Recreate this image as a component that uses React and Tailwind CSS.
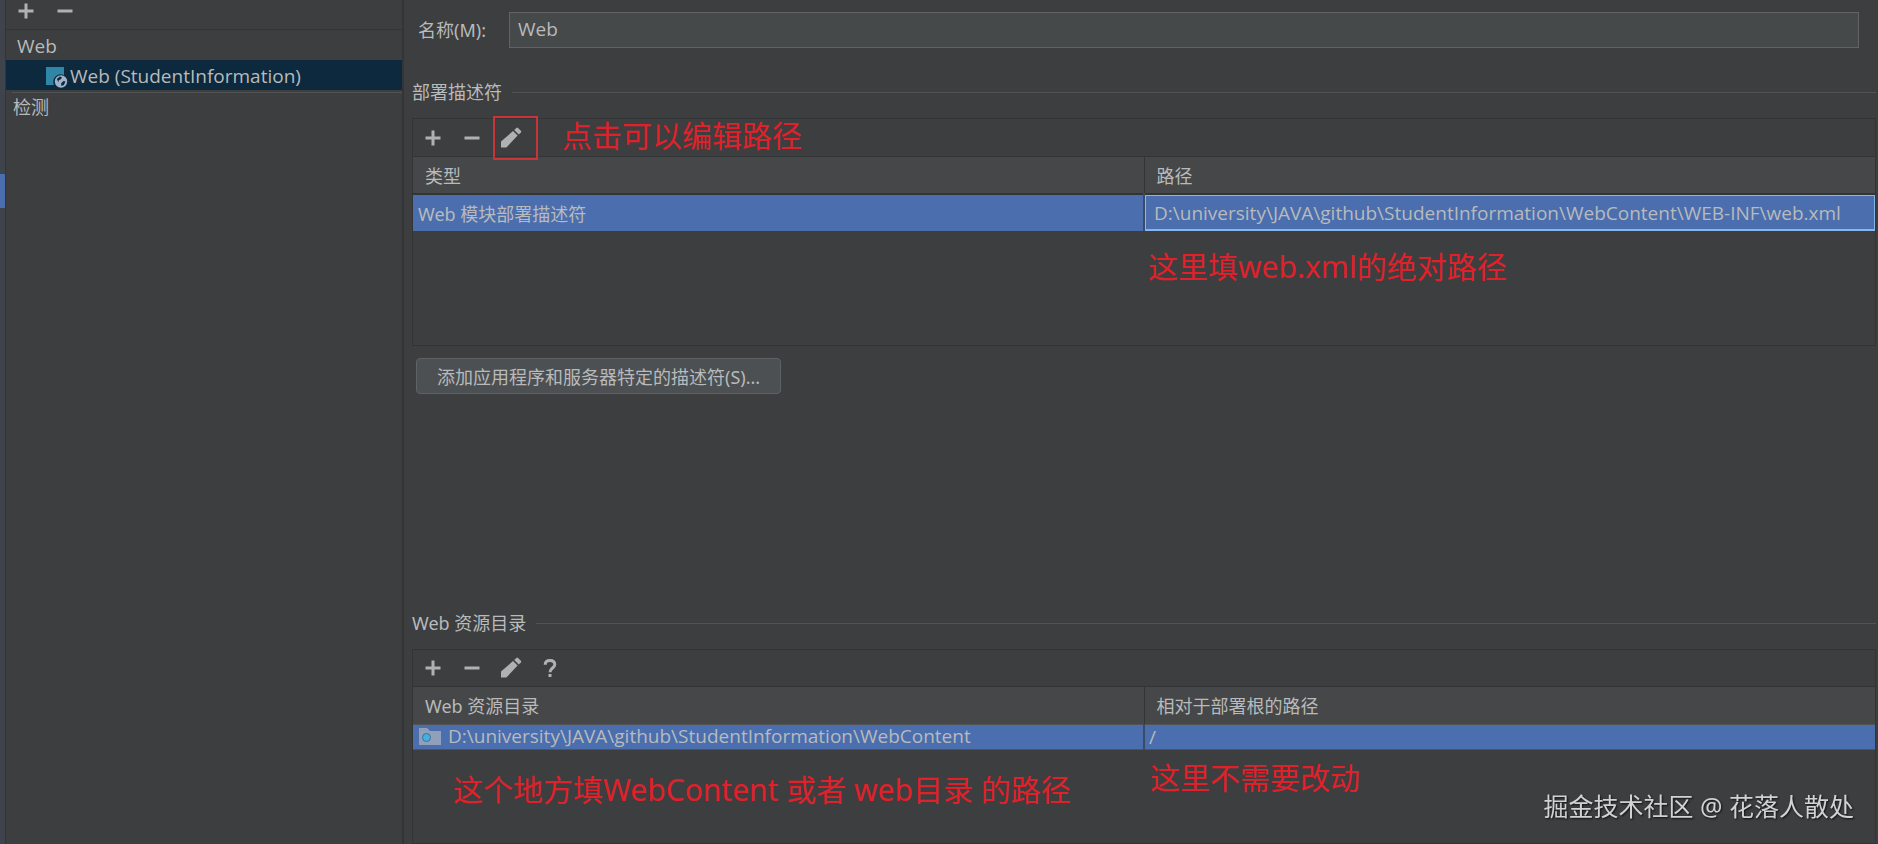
import { useState } from 'react';

const TEXT = "font-['Noto_Sans','Noto_Sans_CJK_SC',sans-serif]";
const LATIN = "text-[19px] font-['Open_Sans','Noto_Sans_CJK_SC',sans-serif]";

function AddIcon() {
  return (
    <svg viewBox="0 0 16 16" className="size-6" fill="#afb1b3">
      <path d="M7 3h2v4h4v2H9v4H7V9H3V7h4z" />
    </svg>
  );
}

function RemoveIcon() {
  return (
    <svg viewBox="0 0 16 16" className="size-6" fill="#afb1b3">
      <path d="M3 7h10v2H3z" />
    </svg>
  );
}

function EditIcon() {
  return (
    <svg viewBox="0 0 24 24" className="size-6" fill="#afb1b3">
      <path d="M2 15.6 14 5l4.6 4.6L7.4 21.5H2z" />
      <path d="M15.2 3.9 17.4 1.9q.8-.7 1.6 0l2.9 2.9q.7.8 0 1.6l-2.1 2.1z" />
    </svg>
  );
}

function HelpIcon() {
  return (
    <svg viewBox="0 0 24 24" className="size-6" fill="none" stroke="#afb1b3" strokeWidth="3">
      <path d="M7.2 8.8C7.2 5.8 9.2 4.400 12 4.400s4.800 1.500 4.800 4.200c0 3.300-4.800 3.600-4.800 7.600" />
      <path d="M12 18v3" />
    </svg>
  );
}

function WebFacetIcon() {
  return (
    <svg viewBox="0 0 24 24" className="size-6 shrink-0">
      <path d="M2 3h18v8.200A7.400 7.400 0 0 0 10 21H2z" fill="#2f86a6" />
      <circle cx="17" cy="17.500" r="6.200" fill="#9fb4c8" />
      <path d="M12.800 15l3-2.600 2 .6-.6 2-2.400 1.200-.4 2zM17 19.500l2.500-2.500 2 .6-1.600 3.500-2.400 1z" fill="#0d293e" />
    </svg>
  );
}

function WebFolderIcon() {
  return (
    <svg viewBox="0 0 24 24" className="size-6 shrink-0">
      <path d="M1 3h8l3 3h11v14H1z" fill="#8fa0b8" />
      <circle cx="8.500" cy="12.500" r="4" fill="#3fb2e3" stroke="#4a6b90" />
    </svg>
  );
}

function ToolButton({ label, children, marked }) {
  return (
    <button type="button" aria-label={label} className="relative flex h-9 w-[39px] items-center justify-center">
      {children}
      {marked && <span className="absolute -top-1 -right-2 -bottom-1 left-0.5 border-2 border-[#c9343a]" />}
    </button>
  );
}

function Section({ title, children }) {
  return (
    <section>
      <div className="flex items-center gap-2.5">
        <h2 className="leading-6">{title}</h2>
        <div className="h-px flex-1 bg-[#515354]" />
      </div>
      {children}
    </section>
  );
}

function Th({ children, first }) {
  return (
    <th className={`h-[37px] w-1/2 border-[#323435] pt-0.5 pl-3 text-left font-normal ${first ? '' : 'border-l'}`}>
      {children}
    </th>
  );
}

function Note({ children, className = '' }) {
  return <p className={`text-[30px] leading-10 whitespace-nowrap text-[#e0212a] ${className}`}>{children}</p>;
}

function Sidebar() {
  return (
    <aside className="w-[398px] shrink-0 border-r-2 border-[#323435]">
      <div className="flex h-[30px] items-end border-b border-[#323435]">
        <ToolButton label="添加">
          <AddIcon />
        </ToolButton>
        <ToolButton label="移除">
          <RemoveIcon />
        </ToolButton>
      </div>
      <ul>
        <li className={`flex h-[30px] items-center pt-0.5 pl-[11px] ${LATIN}`}>Web</li>
        <li className={`flex h-[30px] items-center gap-0.5 bg-[#0d293e] pt-0.5 pl-[38px] ${LATIN}`}>
          <WebFacetIcon />
          Web (StudentInformation)
        </li>
        <li className="mt-0.5 ml-1.5 border-t border-[#515354] px-px leading-7">检测</li>
      </ul>
    </aside>
  );
}

export default function App() {
  const [name, setName] = useState('Web');

  return (
    <div className={`flex min-h-screen bg-[#3c3e40] text-[18px] text-[#b8babb] ${TEXT}`}>
      <div className="w-1.5 shrink-0 border-r border-[#323435] bg-[#3e434c] pt-[174px]">
        <div className="h-[34px] bg-[#4b6eaf]" />
      </div>
      <Sidebar />

      <main className="flex min-w-0 flex-1 flex-col pr-0.5 pl-2">
        <div className="mt-3 flex items-center pr-[17px] pl-1.5">
          <label htmlFor="facet-name" className="w-[91px]">
            名称(M):
          </label>
          <input
            id="facet-name"
            value={name}
            onChange={(e) => setName(e.target.value)}
            className={`h-9 min-w-0 flex-1 border border-[#5f6364] bg-[#45494a] px-2 pb-0.5 outline-none ${LATIN}`}
          />
        </div>

        <div className="mt-8">
          <Section title="部署描述符">
            <div className="mt-3.5 min-h-[228px] border border-[#323435]">
              <div className="flex h-[38px] items-center border-b border-[#323435]">
                <ToolButton label="添加">
                  <AddIcon />
                </ToolButton>
                <ToolButton label="移除">
                  <RemoveIcon />
                </ToolButton>
                <ToolButton label="编辑" marked>
                  <EditIcon />
                </ToolButton>
                <Note className="ml-8 pb-1">点击可以编辑路径</Note>
              </div>
              <table className="w-full table-fixed border-collapse">
                <thead className="bg-[#454748]">
                  <tr>
                    <Th first>类型</Th>
                    <Th>路径</Th>
                  </tr>
                </thead>
                <tbody>
                  <tr className="h-9 border-t-2 border-[#323435] bg-[#4b6eaf]">
                    <td className="border-r-2 border-[#3c4a66] pt-0.5 pl-[5px]">Web 模块部署描述符</td>
                    <td className="p-0">
                      <div
                        className={`flex h-9 items-center border border-b-2 border-[#85b8ea] pt-0.5 pl-2 whitespace-nowrap ${LATIN}`}
                      >
                        D:\university\JAVA\github\StudentInformation\WebContent\WEB-INF\web.xml
                      </div>
                    </td>
                  </tr>
                </tbody>
              </table>
              <Note className="mt-4 ml-[50%] pl-1">这里填web.xml的绝对路径</Note>
            </div>
            <button
              type="button"
              className="mt-3 ml-1 h-9 rounded border border-[#5e6263] bg-[#4c5052] px-5 pt-0.5"
            >
              添加应用程序和服务器特定的描述符(S)...
            </button>
          </Section>
        </div>

        <div className="mt-auto">
          <Section title="Web 资源目录">
            <div className="mt-3.5 min-h-[195px] border border-[#323435]">
              <div className="flex h-[37px] items-center border-b border-[#323435]">
                <ToolButton label="添加">
                  <AddIcon />
                </ToolButton>
                <ToolButton label="移除">
                  <RemoveIcon />
                </ToolButton>
                <ToolButton label="编辑">
                  <EditIcon />
                </ToolButton>
                <ToolButton label="帮助">
                  <HelpIcon />
                </ToolButton>
              </div>
              <table className="w-full table-fixed border-collapse">
                <thead className="bg-[#454748]">
                  <tr>
                    <Th first>Web 资源目录</Th>
                    <Th>相对于部署根的路径</Th>
                  </tr>
                </thead>
                <tbody className={LATIN}>
                  <tr className="border-y border-[#515354] bg-[#4b6eaf]">
                    <td className="border-r-2 border-[#3c4a66] py-0 pl-[5px]">
                      <div className="flex h-6 items-center gap-1.5 whitespace-nowrap">
                        <WebFolderIcon />
                        D:\university\JAVA\github\StudentInformation\WebContent
                      </div>
                    </td>
                    <td className="py-0 pl-1 leading-6">/</td>
                  </tr>
                </tbody>
              </table>
              <div className="grid grid-cols-2">
                <Note className="mt-5 pl-10">这个地方填WebContent 或者 web目录 的路径</Note>
                <Note className="mt-2 pl-1.5">这里不需要改动</Note>
              </div>
            </div>
          </Section>
        </div>
      </main>

      <div className="fixed right-6 bottom-5 text-[25px] leading-9 text-[#d2d2d2] [text-shadow:1px_1px_2px_#111]">
        掘金技术社区 @ 花落人散处
      </div>
    </div>
  );
}
